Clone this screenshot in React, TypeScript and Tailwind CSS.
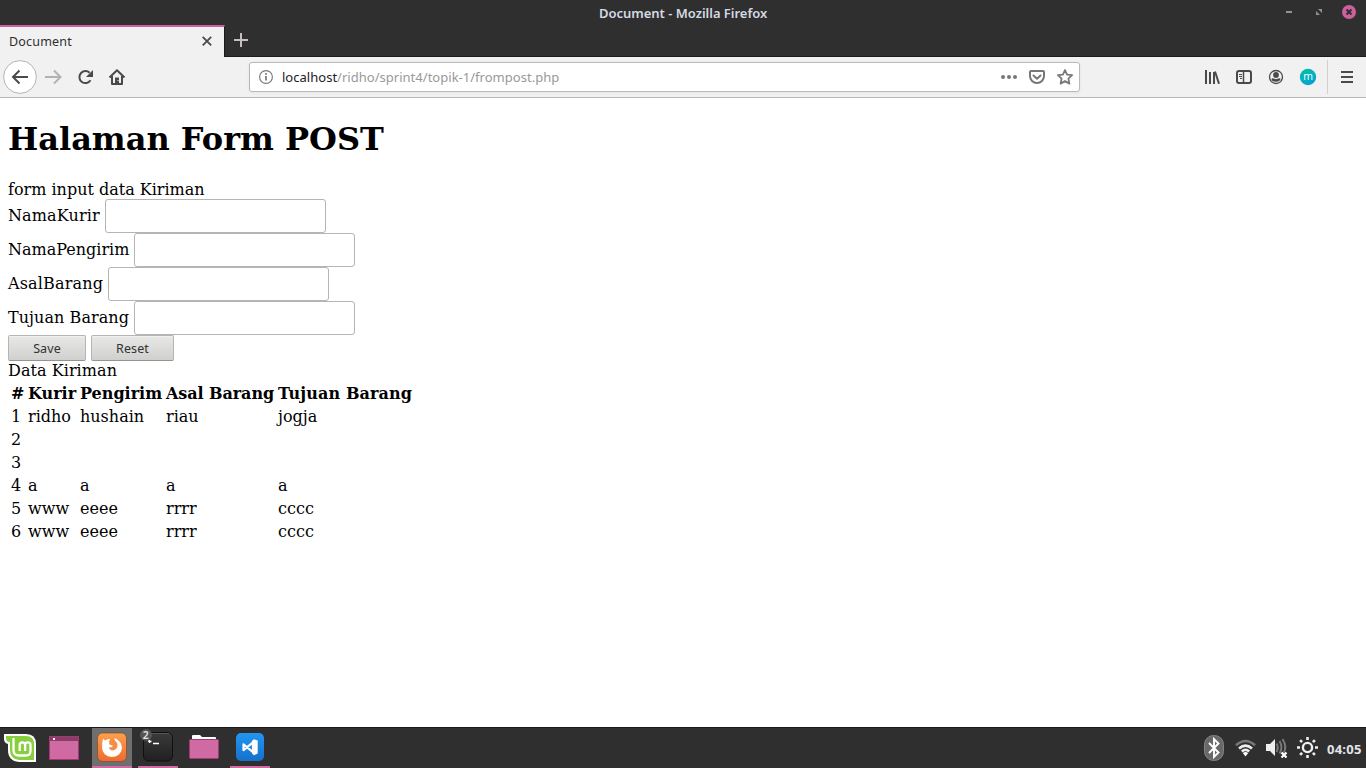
import React from "react";

const ui = "font-['Noto_Sans','Open_Sans',sans-serif]";

const fields = [
  { label: "NamaKurir", gap: "w-[97px] tracking-[0.12px]" },
  { label: "NamaPengirim", gap: "w-[126px]" },
  { label: "AsalBarang", gap: "w-[100px] tracking-[0.17px]" },
  { label: "Tujuan Barang", gap: "w-[126px] tracking-[0.06px]" },
];

const columns = [
  { title: "#", style: "w-[15px]" },
  { title: "Kurir", style: "w-[50px]" },
  { title: "Pengirim", style: "w-[84px]" },
  { title: "Asal Barang", style: "w-[110px] tracking-[-0.08px]" },
  { title: "Tujuan Barang", style: "w-[136px] tracking-[0.12px]" },
];

const rows = [
  ["1", "ridho", "hushain", "riau", "jogja"],
  ["2", "", "", "", ""],
  ["3", "", "", "", ""],
  ["4", "a", "a", "a", "a"],
  ["5", "www", "eeee", "rrrr", "cccc"],
  ["6", "www", "eeee", "rrrr", "cccc"],
];

function TitleBar() {
  return (
    <div className="relative flex h-[25px] shrink-0 items-center justify-center">
      <span className={`${ui} mt-px w-[168px] whitespace-nowrap text-[13px] leading-none font-semibold tracking-[-0.02px] text-[#d3dae3]`}>
        Document - Mozilla Firefox
      </span>
      <div className="absolute top-0 right-0">
        <svg width="86" height="25" viewBox="1280 0 86 25" className="block">
          <rect x="1286" y="11" width="6" height="2" fill="#929292" />
          <path d="M1318 9h4v4zM1316 11v4h4z" fill="#929292" />
          <circle cx="1349" cy="12" r="7" fill="#cc609c" />
          <path d="M1346.5 9.5l5 5m0-5l-5 5" stroke="#2f2f2f" strokeWidth="2" />
        </svg>
      </div>
    </div>
  );
}

function TabStrip() {
  return (
    <div className="flex h-8 shrink-0">
      <div className="flex w-[225px] items-center border-t-2 border-r border-t-[#cc609c] border-r-[#1b1b1b] bg-[#f1f1f1] pl-[9px]">
        <span className={`${ui} flex-1 text-[12.5px] leading-none tracking-[0.2px] text-[#2f2f2f]`}>Document</span>
        <svg width="34" height="30" viewBox="190 27 34 30">
          <path d="M202.7 36.8l8.5 8.5m0-8.5l-8.5 8.5" stroke="#4a4a4a" strokeWidth="1.8" />
        </svg>
      </div>
      <div className="flex flex-1 border-b border-[#1b1b1b]">
        <svg width="32" height="31" viewBox="225 25 32 31">
          <path d="M234 40h14M241 33v14" stroke="#c7bfbf" strokeWidth="2" />
        </svg>
      </div>
    </div>
  );
}

function Toolbar() {
  return (
    <div className="flex h-[41px] shrink-0 items-start border-b border-[#b6b6b6] bg-[#f1f1f1]">
      <svg width="249" height="40" viewBox="0 57 249 40" fill="none" className="shrink-0">
        <circle cx="20" cy="77" r="16.4" fill="#fff" stroke="#b4b4b4" />
        <path d="M28 77H13.5M19.5 70.5L13 77l6.5 6.5" stroke="#4a4a4a" strokeWidth="2" />
        <path d="M45 77h14.5M54 70.5l6.5 6.5-6.5 6.5" stroke="#b2b2b2" strokeWidth="2" />
        <path d="M90.5 80.3A6 6 0 1 1 89.6 72.8" stroke="#4a4a4a" strokeWidth="2" />
        <path d="M93 70v7h-7z" fill="#4a4a4a" />
        <path d="M109.5 77.5l7.5-7.3 7.5 7.3M112 76v8h10v-8" stroke="#4a4a4a" strokeWidth="2" strokeLinejoin="round" />
        <path d="M115 84v-6.5h4V84" fill="#4a4a4a" />
        <path d="M117.5 80h1v1h-1z" fill="#f1f1f1" />
      </svg>
      <div className="mt-[5px] flex h-[30px] w-[831px] shrink-0 items-center rounded-[3px] border border-[#b9b9b9] bg-white shadow-[0_1px_3px_rgba(0,0,0,0.06)]">
        <svg width="32" height="28" viewBox="250 63 32 28" fill="none" className="shrink-0">
          <circle cx="266" cy="77" r="6.4" stroke="#777" strokeWidth="1.1" />
          <path d="M266 76v4.5M266 73v1.7" stroke="#777" strokeWidth="1.7" />
        </svg>
        <span className={`${ui} flex-1 whitespace-nowrap text-[13px] leading-none tracking-[0.02px] text-[#999]`}>
          <span className="text-[#222]">localhost</span>/ridho/sprint4/topik-1/frompost.php
        </span>
        <svg width="84" height="28" viewBox="995 63 84 28" fill="none" className="shrink-0">
          <g fill="#777"><circle cx="1003" cy="77" r="2" /><circle cx="1009" cy="77" r="2" /><circle cx="1015" cy="77" r="2" /></g>
          <path d="M1031 71h12q1 0 1 1v4a7 7 0 0 1-14 0v-4q0-1 1-1z" stroke="#777" strokeWidth="2" />
          <path d="M1033.5 75.5l3.5 3.3 3.5-3.3" stroke="#777" strokeWidth="2" strokeLinecap="round" strokeLinejoin="round" />
          <path d="M1065 70l2.1 4.6 5 .6-3.7 3.4 1 5-4.4-2.5-4.4 2.5 1-5-3.7-3.4 5-.6z" stroke="#777" strokeWidth="1.8" strokeLinejoin="round" />
        </svg>
      </div>
      <div className="flex flex-1 justify-end">
        <svg width="176" height="40" viewBox="1190 57 176 40" fill="none">
          <path d="M1206 70v14M1210 72v12M1214 72v12" stroke="#4a4a4a" strokeWidth="2" />
          <path d="M1215 71.5l4 12.2" stroke="#4a4a4a" strokeWidth="2" />
          <rect x="1237" y="71" width="14" height="12" rx="2" stroke="#4a4a4a" strokeWidth="2" />
          <path d="M1243.5 71v12" stroke="#4a4a4a" strokeWidth="1.5" />
          <path d="M1239 74.5h3M1239 76.5h3M1240 78.5h2" stroke="#4a4a4a" />
          <circle cx="1276" cy="77" r="6.5" stroke="#4a4a4a" strokeWidth="1.3" />
          <circle cx="1276" cy="75" r="2.9" fill="#4a4a4a" />
          <path d="M1271.5 78.5q2-.5 3 .3 1.5.8 3 0 1-.8 3-.3 0 3-4.5 3.2t-4.5-3.2z" fill="#4a4a4a" />
          <defs><linearGradient id="account" x2="0.5" y2="1"><stop stopColor="#08c1a2" /><stop offset="1" stopColor="#00a5d1" /></linearGradient></defs>
          <circle cx="1308" cy="77" r="8.2" fill="url(#account)" />
          <text x="1308" y="80" textAnchor="middle" fill="#fff" fontFamily="Open Sans" fontWeight="500" fontSize="10.5">m</text>
          <path d="M1327.5 60v34" stroke="#d0d0d0" />
          <path d="M1341 72h12M1341 77h12M1341 82h12" stroke="#4a4a4a" strokeWidth="2" />
        </svg>
      </div>
    </div>
  );
}

function FormButton({ children, width }: { children: string; width: string }) {
  return (
    <button className={`${ui} ${width} h-[26px] rounded-[2px] border border-[#b5b5b3] border-b-[#949492] bg-linear-to-b from-[#e8e8e7] to-[#d0d0ce] pt-[2px] text-[12.5px] leading-none tracking-[0.1px] text-[#333] shadow-[inset_0_1px_0_#f0f0ef]`}>
      {children}
    </button>
  );
}

function Page() {
  return (
    <main className="flex-1 bg-white pl-2 font-['DejaVu_Serif',serif] text-base leading-[19px] text-black">
      <h1 className="pt-[23px] text-[32px] leading-[37px] font-bold">Halaman Form POST</h1>
      <p className="mt-[22px]">form input data Kiriman</p>
      <form>
        {fields.map((f) => (
          <div key={f.label} className="flex h-[34px]">
            <label className={`${f.gap} shrink-0 pt-[7px] whitespace-nowrap`}>{f.label}</label>
            <input className="h-[34px] w-[221px] rounded-[3px] border border-[#b5b5b3] bg-white" />
          </div>
        ))}
        <div className="flex gap-[5px]">
          <FormButton width="w-[78px]">Save</FormButton>
          <FormButton width="w-[83px]">Reset</FormButton>
        </div>
      </form>
      <p className="tracking-[0.06px]">Data Kiriman</p>
      <table className="mt-px w-[407px] table-fixed border-separate border-spacing-[2px]">
        <thead>
          <tr>
            {columns.map((c) => (
              <th key={c.title} className={`${c.style} p-px text-center font-bold whitespace-nowrap`}>{c.title}</th>
            ))}
          </tr>
        </thead>
        <tbody>
          {rows.map((r) => (
            <tr key={r[0]}>
              {r.map((c, i) => (
                <td key={i} className="h-[21px] p-px">{c}</td>
              ))}
            </tr>
          ))}
        </tbody>
      </table>
    </main>
  );
}

function Taskbar() {
  return (
    <div className="flex h-[41px] shrink-0 items-center justify-between border-t border-[#1b1b1b] bg-[#2f2f2f]">
      <svg width="280" height="40" viewBox="0 728 280 40" fill="none">
        <defs>
          <linearGradient id="orange" x2="0" y2="1"><stop stopColor="#ffa04c" /><stop offset="1" stopColor="#ee6b2e" /></linearGradient>
          <linearGradient id="dark" x2="0" y2="1"><stop stopColor="#3b3b3b" /><stop offset="1" stopColor="#202020" /></linearGradient>
          <linearGradient id="blue" x2="0" y2="1"><stop stopColor="#2196f3" /><stop offset="1" stopColor="#1670cc" /></linearGradient>
        </defs>
        <path d="M4 734h22q10 0 10 10v18H19q-11-1-11-12v-6q-4-1-4-5z" fill="#fff" />
        <path d="M6 736h20q8 0 8 8v16H19q-9-1-9-10v-8q-4 0-4-4z" fill="#87cf3e" />
        <path d="M13.5 738v12q0 5.500 5.500 5.500h7q4.500 0 4.500-4.500v-6q0-2.700-2.700-2.700t-2.700 2.700v6m0-6q0-2.700-2.700-2.700t-2.700 2.700v6" stroke="#fff" strokeWidth="2.300" />
        <rect x="49.500" y="736.500" width="29" height="23" fill="#cf6ba2" stroke="#a13972" />
        <path d="M50 737h28v4H50z" fill="#873e68" /><path d="M53 738h2v2h-2z" fill="#fff" />
        <path d="M92 728h40v38H92z" fill="#6f6f6f" /><path d="M92 766h40v2H92z" fill="#cf6ba2" />
        <rect x="97.500" y="733" width="29" height="28.500" rx="5" fill="url(#orange)" stroke="#7a4b2d" strokeWidth=".7" />
        <path d="M103 738.500l2 2q2.500-2 5-1.500l-1 3h6l-.5-4q7 3 7.500 9.500-.5 9-10 9.500-9.500-.5-10-9.500 0-5 1-9z" fill="#fff" />
        <path d="M110.500 740.500q3-1.500 5.500 1 3 4 0 7.500-3 2.500-6 .5-1.200-1-1-2.200 3 .5 4-1.500l-3.500-1.300q-.8-2 1-4z" fill="#f78c42" />
        <path d="M138 766h40v2h-40zM230 766h40v2h-40z" fill="#cf6ba2" />
        <rect x="143.500" y="732.500" width="29" height="28.500" rx="5" fill="url(#dark)" stroke="#101010" />
        <path d="M147 733.500h22" stroke="#555" />
        <path d="M148 741l3.500 .5M149.500 740v3M153 743.500h6" stroke="#fff" strokeWidth="1.400" />
        <circle cx="146" cy="735" r="6" fill="#555" />
        <text x="145.800" y="738.500" textAnchor="middle" fill="#e5e5e5" fontFamily="Noto Sans" fontWeight="600" fontSize="10.500">2</text>
        <path d="M192 740v-4q0-1 1-1h7l2 2h13q1 0 1 1v2z" fill="#fff" />
        <rect x="189.500" y="739.500" width="29" height="19" rx="1" fill="#cf6ba2" stroke="#a13972" />
        <rect x="236" y="733" width="28" height="28" rx="5" fill="url(#blue)" />
        <path d="M243.500 744.300v5.800l9.500-7.800v9.800z" stroke="#fff" strokeWidth="2.200" strokeLinejoin="round" />
        <path d="M252 740.800l2-1.600 3.700 1.400v13l-3.700 1.600-2-1.600z" fill="#fff" />
      </svg>
      <div className="flex items-center">
        <svg width="127" height="40" viewBox="1200 728 127 40" fill="none">
          <rect x="1204.500" y="735.500" width="19" height="25" rx="9" fill="#686868" stroke="#858585" />
          <path d="M1209 743l9.500 9.500-4.500 4.500v-18l4.500 4.500-9.500 9.500" stroke="#fff" strokeWidth="1.900" />
          <path d="M1236 745.200q9.500-8.500 19 0" stroke="#777" strokeWidth="2.500" />
          <path d="M1239 748.500q6.500-5.800 13 0M1241.800 751.500q3.700-3.300 7.400 0" stroke="#eee" strokeWidth="2.500" />
          <path d="M1242.800 753q2.700-2 5.400 0l-2.700 3.500z" fill="#fff" />
          <path d="M1266 744h4l5-5v17l-5-5h-4z" fill="#eee" />
          <path d="M1276.500 743.500q2.500 4 0 8.500M1279.500 741q4 6.500 0 12.500M1282.500 739q5 8 1 14" stroke="#777" strokeWidth="2" />
          <path d="M1281.500 752.500l5 5m0-5l-5 5" stroke="#fff" strokeWidth="2.200" />
          <circle cx="1307.500" cy="747.500" r="4.600" stroke="#eee" strokeWidth="2.400" />
          <path d="M1307.500 737v3m0 15v3M1297 747.500h3m15 0h3M1300.100 740.100l2 2m10.800 10.800l2 2M1300.100 754.900l2-2m10.800-10.800l2-2" stroke="#eee" strokeWidth="2.600" />
        </svg>
        <span className={`${ui} mt-[3px] w-[39px] text-[13px] leading-none font-bold tracking-[0.25px] whitespace-nowrap text-[#e1e5ea]`}>04:05</span>
      </div>
    </div>
  );
}

export default function App() {
  return (
    <div className="flex h-[768px] w-[1366px] flex-col overflow-hidden bg-[#2f2f2f]">
      <TitleBar />
      <TabStrip />
      <Toolbar />
      <Page />
      <Taskbar />
    </div>
  );
}
